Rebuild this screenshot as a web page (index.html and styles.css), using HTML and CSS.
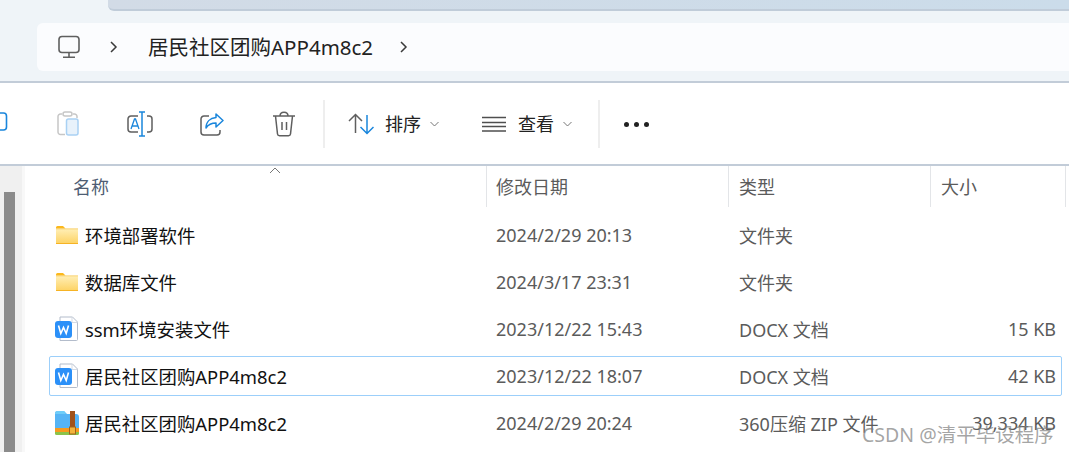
FILE: index.html
```html
<!DOCTYPE html>
<html lang="zh-CN">
<head>
    <meta charset="UTF-8">
    <meta name="viewport" content="width=device-width, initial-scale=1.0">
    <title>居民社区团购APP4m8c2</title>
    <link rel="stylesheet" href="styles.css">
</head>
<body>
    <svg class="defs" width="0" height="0">
        <defs>
            <linearGradient id="folder-fill" x1="0" y1="0" x2="0" y2="1">
                <stop offset="0" stop-color="#ffeeb4"/>
                <stop offset="1" stop-color="#fdd365"/>
            </linearGradient>
        </defs>
        <symbol id="folder" viewBox="0 0 24 20">
            <path d="M1 2.500Q1 1 2.500 1H8l2.500 2.500H1z" fill="#fbb81c"/>
            <path d="M1 3.500h22V18a1 1 0 0 1-1 1H2a1 1 0 0 1-1-1z" fill="#f7c54a"/>
            <path d="M1 4.200h22V18a1 1 0 0 1-1 .500H2a1 1 0 0 1-1-.500z" fill="url(#folder-fill)"/>
            <path d="M1 18h22v1H1z" fill="#f6b324"/>
        </symbol>
        <symbol id="word" viewBox="0 0 24 26">
            <path d="M5 1h12.500L22.500 6V23.500a1 1 0 0 1-1 1H5z" fill="#fff" stroke="#b3bccb" stroke-width="1"/>
            <path d="M17 1.200V6.500H22.500" fill="none" stroke="#d5dbe4" stroke-width="1"/>
            <rect x="0" y="5" width="17" height="17" rx="3" fill="#2b90f8"/>
            <path d="M3.500 9.500L5.800 17.500L8.500 11.500L11.200 17.500L13.500 9.500" fill="none" stroke="#fff" stroke-width="1.600"/>
        </symbol>
        <symbol id="zip" viewBox="0 0 24 24">
            <path d="M0 2.500Q0 0 2.500 0H9l3 3h9q3 0 3 3V17H0z" fill="#56b4f5"/>
            <path d="M0 2.500Q0 0 2.500 0H9l2 3H0z" fill="#6fcdf9"/>
            <rect x="0" y="17" width="24" height="4" fill="#f79a1e"/>
            <path d="M0 21h24v1.500a1.500 1.500 0 0 1-1.500 1.500H1.500A1.500 1.500 0 0 1 0 22.500z" fill="#8bc34a"/>
            <rect x="15" y="0" width="5" height="17" fill="#a0521a"/>
            <rect x="14.500" y="16" width="6" height="7" fill="#f2b43c" stroke="#a0621a" stroke-width="1"/>
        </symbol>
    </svg>

    <div class="window">
        <div class="top">
            <div class="tab"></div>
            <div class="address">
                <svg class="pc-icon" width="24" height="24" viewBox="0 0 24 24" fill="none" stroke="#5f5f5f" stroke-width="1.600">
                    <rect x="2" y="1.500" width="20" height="16" rx="3"/>
                    <path d="M12 18v4M6 22.200h12"/>
                </svg>
                <svg class="crumb-arrow" width="10" height="14" viewBox="0 0 10 14" fill="none" stroke="#3a3a3a" stroke-width="1.500"><path d="M2 2l5 5-5 5"/></svg>
                <span class="crumb">居民社区团购APP4m8c2</span>
                <svg class="crumb-arrow" width="10" height="14" viewBox="0 0 10 14" fill="none" stroke="#3a3a3a" stroke-width="1.500"><path d="M2 2l5 5-5 5"/></svg>
            </div>
        </div>

        <div class="toolbar">
            <div class="tool">
                <svg width="24" height="24" viewBox="0 0 24 24" fill="none"><rect x="7.500" y="1" width="15" height="17" rx="3" stroke="#1a86dc" stroke-width="1.600"/></svg>
            </div>
            <div class="tool">
                <svg width="24" height="26" viewBox="0 0 24 26" fill="none">
                    <path d="M6 3H4.500A2.500 2.500 0 0 0 2 5.500V21a2.500 2.500 0 0 0 2.500 2.500H9M17 3h1.500A2.500 2.500 0 0 1 21 5.500V7" stroke="#c6c6c6" stroke-width="1.500"/>
                    <rect x="7" y="1" width="9" height="4" rx="2" stroke="#c6c6c6" stroke-width="1.500"/>
                    <rect x="10.500" y="8" width="11.500" height="16" rx="2" fill="#e8f2fb" stroke="#a9d1f4" stroke-width="1.500"/>
                </svg>
            </div>
            <div class="tool">
                <svg width="26" height="26" viewBox="0 0 26 26" fill="none">
                    <path d="M11 5H4a3 3 0 0 0-3 3v10a3 3 0 0 0 3 3h7M20 5h2a3 3 0 0 1 3 3v10a3 3 0 0 1-3 3h-2" stroke="#5f5f5f" stroke-width="1.500"/>
                    <path d="M12 1h6M12 25h6M15 1v24" stroke="#1a86dc" stroke-width="1.500"/>
                    <path d="M4 18l3.500-10h1L12 18M5.200 15h6" stroke="#1a86dc" stroke-width="1.300"/>
                </svg>
            </div>
            <div class="tool">
                <svg width="24" height="24" viewBox="0 0 24 24" fill="none">
                    <path d="M9 4H4a3 3 0 0 0-3 3v13a3 3 0 0 0 3 3h13a3 3 0 0 0 3-3v-2" stroke="#5f5f5f" stroke-width="1.500"/>
                    <path d="M16 2l7 6.500-7 6.500v-4c-5 0-8 2-10 5 0-6 4-10 10-10.500z" stroke="#1a86dc" stroke-width="1.500" stroke-linejoin="round"/>
                </svg>
            </div>
            <div class="tool">
                <svg width="24" height="26" viewBox="0 0 24 26" fill="none" stroke="#5f5f5f" stroke-width="1.500">
                    <path d="M1 5h22M8 5c0-5 8-5 8 0M3.500 5l2 18a2 2 0 0 0 2 1.800h9a2 2 0 0 0 2-1.800l2-18M10 11v8M14.500 11v8"/>
                </svg>
            </div>
            <div class="tool-sep"></div>
            <div class="tool-menu menu-sort">
                <svg width="26" height="22" viewBox="0 0 26 22" fill="none" stroke-width="1.500">
                    <path d="M1 8l6.500-6.500L14 8M7.500 2v18" stroke="#5f5f5f"/>
                    <path d="M12.500 14l6.500 6.500L25.500 14M19 20V2" stroke="#1a86dc"/>
                </svg>
                <span class="menu-label">排序</span>
                <svg class="caret" width="9" height="6" viewBox="0 0 9 6" fill="none" stroke="#777" stroke-width="1"><path d="M.5 1l4 4 4-4"/></svg>
            </div>
            <div class="tool-menu menu-view">
                <svg width="24" height="16" viewBox="0 0 24 16" fill="none" stroke="#4f4f4f" stroke-width="1.300">
                    <path d="M0 1.500h24M0 6.500h24M0 10.500h24M0 15h24"/>
                </svg>
                <span class="menu-label">查看</span>
                <svg class="caret" width="9" height="6" viewBox="0 0 9 6" fill="none" stroke="#777" stroke-width="1"><path d="M.5 1l4 4 4-4"/></svg>
            </div>
            <div class="tool-sep"></div>
            <div class="more"><i></i><i></i><i></i></div>
        </div>

        <div class="main">
            <div class="nav">
                <div class="nav-thumb"></div>
            </div>
            <div class="files">
                <div class="head">
                    <div class="col-name">名称</div>
                    <div class="col-date">修改日期</div>
                    <div class="col-type">类型</div>
                    <div class="col-size">大小</div>
                    <svg class="sort-up" width="12" height="7" viewBox="0 0 12 7" fill="none" stroke="#777" stroke-width="1"><path d="M1 6l5-5 5 5"/></svg>
                </div>

                <div class="row">
                    <div class="col-name"><svg class="file-icon" width="24" height="20"><use href="#folder"/></svg>环境部署软件</div>
                    <div class="col-date">2024/2/29 20:13</div>
                    <div class="col-type">文件夹</div>
                    <div class="col-size"></div>
                </div>
                <div class="row">
                    <div class="col-name"><svg class="file-icon" width="24" height="20"><use href="#folder"/></svg>数据库文件</div>
                    <div class="col-date">2024/3/17 23:31</div>
                    <div class="col-type">文件夹</div>
                    <div class="col-size"></div>
                </div>
                <div class="row">
                    <div class="col-name"><svg class="file-icon" width="24" height="26"><use href="#word"/></svg>ssm环境安装文件</div>
                    <div class="col-date">2023/12/22 15:43</div>
                    <div class="col-type">DOCX 文档</div>
                    <div class="col-size">15 KB</div>
                </div>
                <div class="row selected">
                    <div class="col-name"><svg class="file-icon" width="24" height="26"><use href="#word"/></svg>居民社区团购APP4m8c2</div>
                    <div class="col-date">2023/12/22 18:07</div>
                    <div class="col-type">DOCX 文档</div>
                    <div class="col-size">42 KB</div>
                </div>
                <div class="row">
                    <div class="col-name"><svg class="file-icon" width="24" height="24"><use href="#zip"/></svg>居民社区团购APP4m8c2</div>
                    <div class="col-date">2024/2/29 20:24</div>
                    <div class="col-type">360压缩 ZIP 文件</div>
                    <div class="col-size">39,334 KB</div>
                </div>
            </div>
        </div>

        <div class="watermark">CSDN @清平毕设程序</div>
    </div>
</body>
</html>
```

FILE: styles.css
```css
body {
    margin: 0;
    padding: 0;
    background: #fff;
    font-family: "Noto Sans", "Noto Sans CJK SC", sans-serif;
    color: #1a1a1a;
    overflow: hidden;
}

.defs {
    position: absolute;
}

.window {
    position: relative;
    width: 1069px;
    height: 452px;
    overflow: hidden;
}

/* Address bar */
.top {
    height: 81px;
    background: #eff4f8;
    border-bottom: 2px solid #c2ccd8;
}

.tab {
    height: 9px;
    margin-left: 108px;
    background: linear-gradient(90deg, #d2dbe6, #cbdcea);
    border-bottom: 2px solid #c0ccd9;
    border-bottom-left-radius: 6px;
}

.address {
    display: flex;
    align-items: center;
    height: 48px;
    margin: 12px 0 0 37px;
    padding-left: 20px;
    background: #fbfcfe;
    border-radius: 6px 0 0 6px;
}

.crumb-arrow {
    margin-left: 28px;
}

.crumb {
    margin: 0 26px 0 29px;
    padding-bottom: 2px;
    font-size: 20.500px;
    color: #222;
}

.crumb + .crumb-arrow {
    margin-left: 0;
}

/* Toolbar */
.toolbar {
    display: flex;
    align-items: center;
    height: 81px;
    margin-left: -40px;
    border-bottom: 2px solid #c2ccd8;
}

.tool {
    display: flex;
    justify-content: center;
    width: 72px;
}

.tool:nth-child(5) {
    margin-right: 3px;
}

.tool-sep {
    width: 2px;
    height: 48px;
    background: #eeeeee;
}

.tool-menu {
    display: flex;
    align-items: center;
    font-size: 18px;
    color: #222;
}

.menu-sort {
    margin-left: 23px;
}

.menu-view {
    margin: 0 26px 0 43px;
}

.menu-label {
    margin: 0 9px 0 11px;
    padding-bottom: 1px;
}

.menu-view .menu-label {
    margin-left: 12px;
}

.more {
    display: flex;
    gap: 5px;
    margin: 2px 0 0 24px;
}

.more i {
    width: 5px;
    height: 5px;
    background: #222;
    border-radius: 50%;
}

/* File list */
.main {
    display: flex;
    height: 286px;
}

.nav {
    width: 11px;
    padding: 26px 7px 0 4px;
    background: #f0f0f0;
    border-right: 3px solid #f8f8f8;
    flex-shrink: 0;
}

.nav-thumb {
    height: 100%;
    background: #8b8b8b;
}

.files {
    flex: 1;
    padding-left: 24px;
}

.head,
.row {
    display: flex;
    align-items: center;
    font-size: 18px;
}

.head {
    position: relative;
    height: 41px;
    margin-bottom: 8px;
    color: #4e5d73;
}

.head .col-name {
    padding: 0 0 2px 24px;
}

.head > div {
    align-self: stretch;
    display: flex;
    align-items: center;
}

.head .col-date,
.head .col-type,
.head .col-size {
    box-sizing: border-box;
    margin-left: -1px;
    padding: 0 0 2px 9px;
    border-left: 1px solid #e3e5e8;
}

.head .col-date { width: 243px; }
.head .col-type { width: 203px; padding-left: 10px; }
.head .col-size { width: 136px; padding-left: 10px; border-right: 1px solid #e3e5e8; }

.sort-up {
    position: absolute;
    left: 220px;
    top: 1px;
}

.col-name {
    display: flex;
    align-items: center;
    width: 438px;
    box-sizing: border-box;
}

.col-date {
    width: 243px;
    color: #5b5b5b;
}

.col-type {
    width: 203px;
    color: #5b5b5b;
}

.col-size {
    width: 114px;
    color: #5b5b5b;
    text-align: right;
    white-space: nowrap;
}

.row {
    box-sizing: border-box;
    height: 40px;
    width: 1013px;
    margin-bottom: 7px;
    border: 1px solid transparent;
    border-radius: 2px;
    color: #5b5b5b;
}

.row .col-name {
    width: 446px;
    padding-left: 5px;
    color: #111;
    font-size: 18.400px;
}

.file-icon {
    flex-shrink: 0;
    margin-right: 6px;
}

.selected {
    border-color: #9ccffa;
}

.watermark {
    position: absolute;
    left: 862px;
    top: 419px;
    font-size: 19.500px;
    color: rgba(125, 125, 125, 0.7);
    white-space: nowrap;
}
```
